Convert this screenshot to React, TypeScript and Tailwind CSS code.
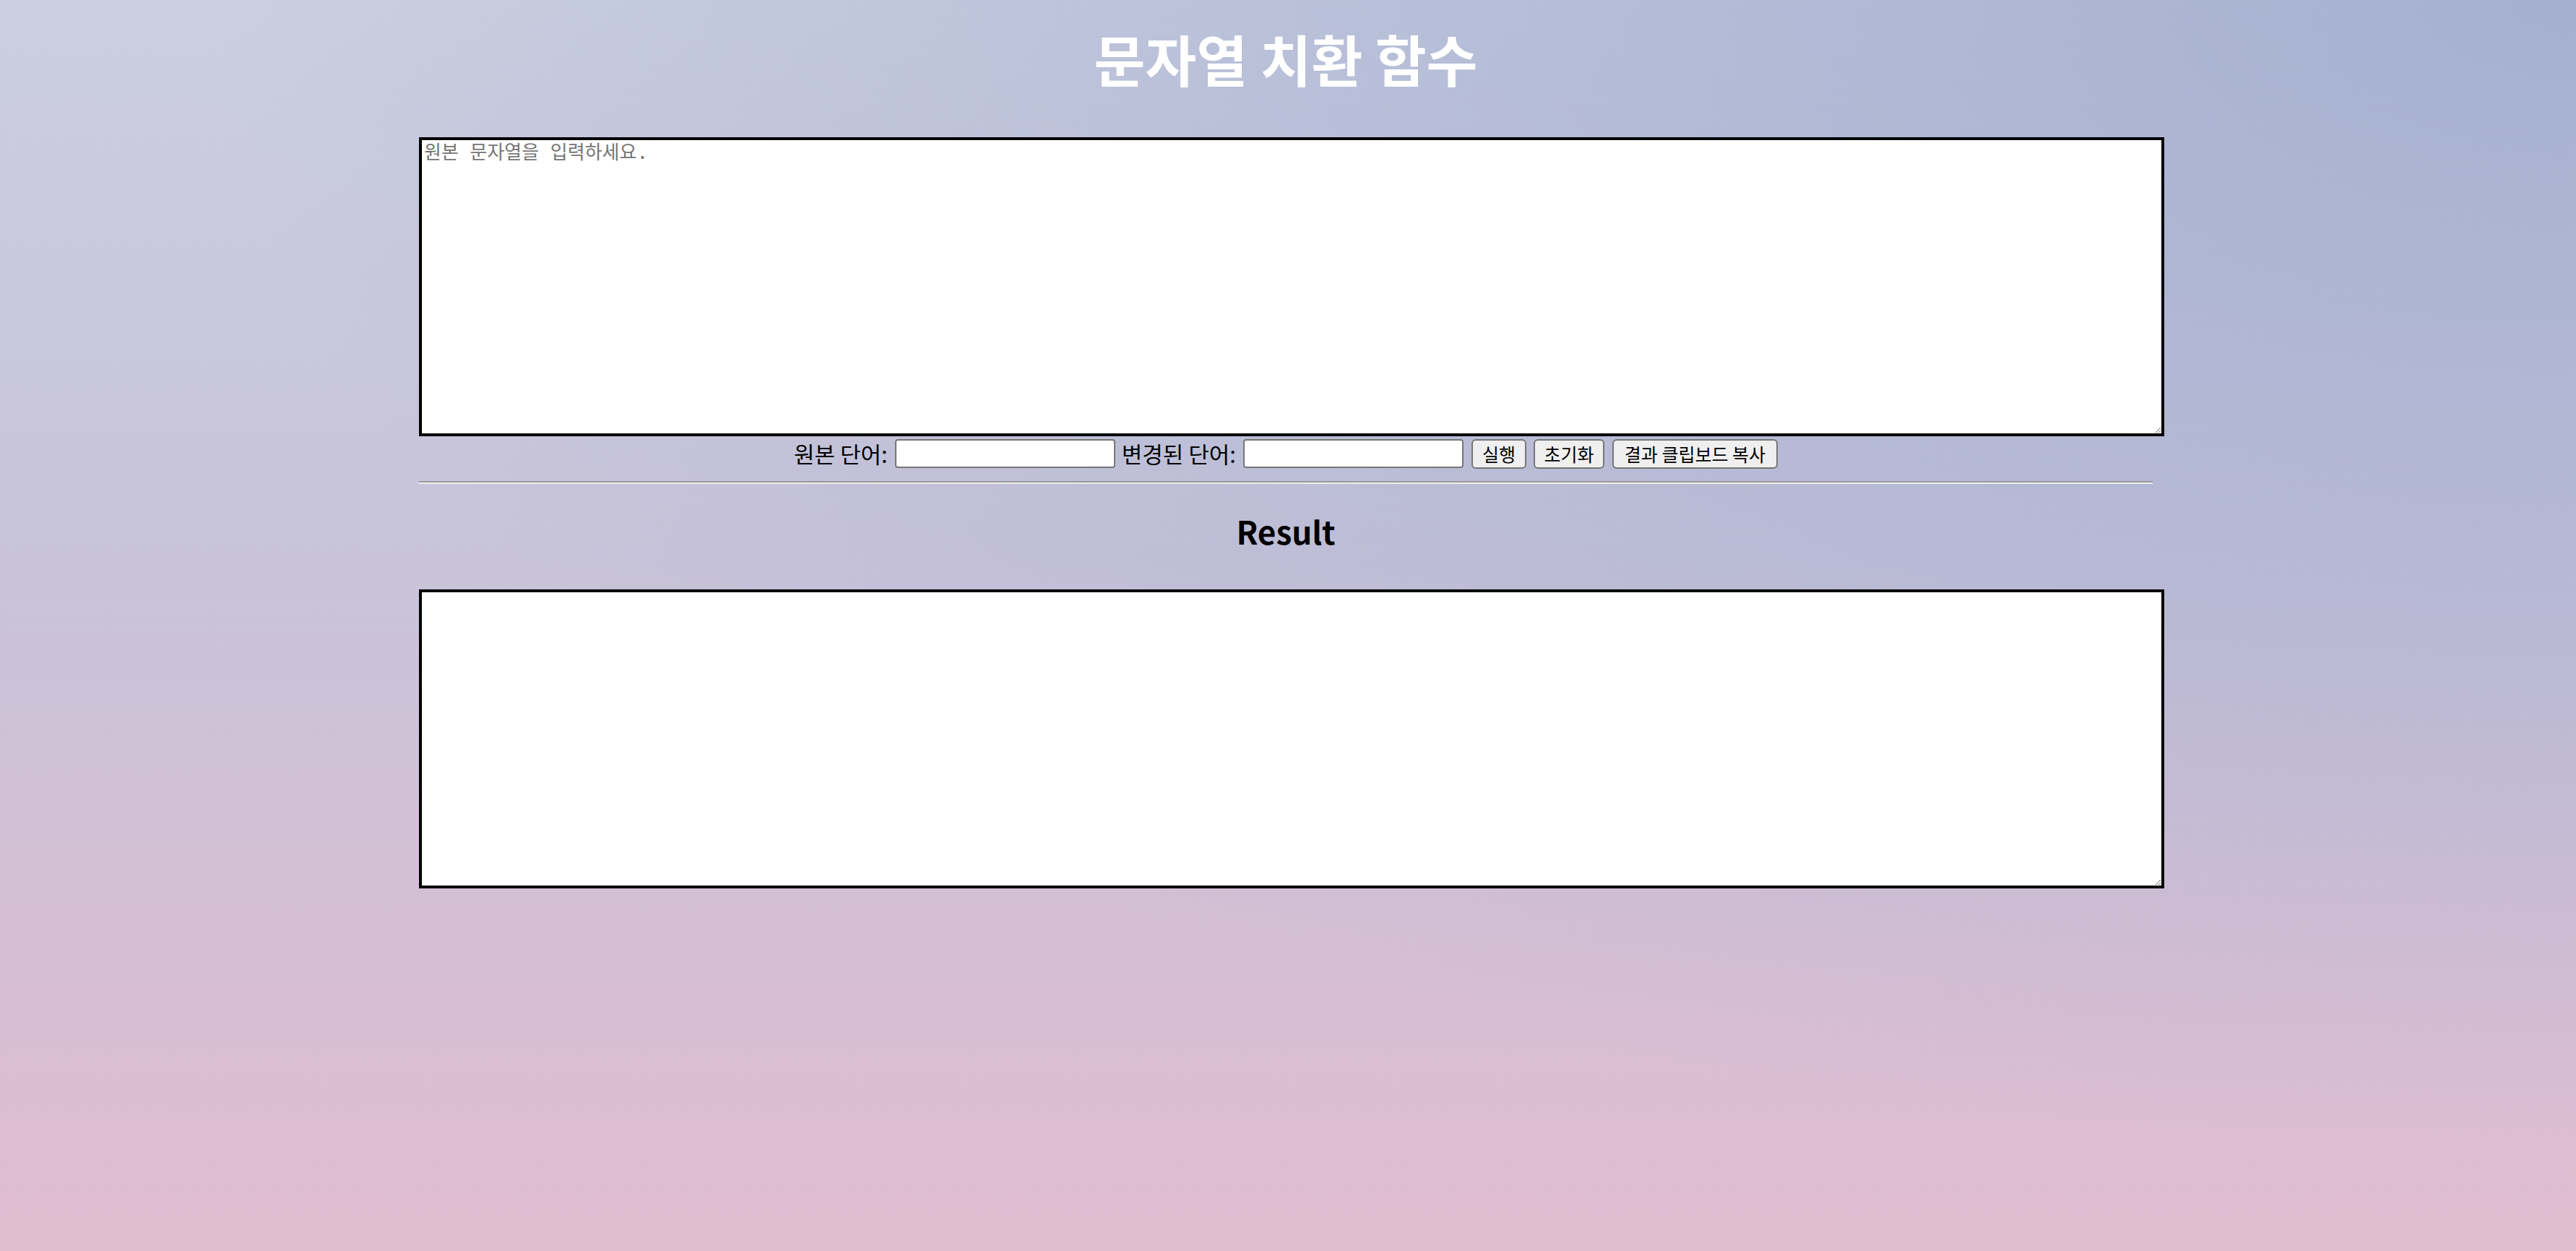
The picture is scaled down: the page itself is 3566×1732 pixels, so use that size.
import React from "react";

export default function App() {
  return (
    <div
      className="min-h-[1732px] w-full bg-[radial-gradient(ellipse_at_top_right,rgba(158,170,206,0.85),rgba(158,170,206,0)_65%),linear-gradient(to_bottom,#cbcfe0,#c8c3d9_45%,#e1bcd0)]"
      style={{ fontFamily: '"Noto Sans CJK KR", "Noto Sans", sans-serif' }}
    >
      <div className="pl-[580px] flex flex-col">
        <h1 className="w-[2400px] h-[160px] flex items-center justify-center text-white font-bold text-[77px] leading-none m-0">
          문자열 치환 함수
        </h1>
        <textarea
          className="mt-[30px] w-[2416px] h-[414px] border-4 border-black bg-white pl-[3px] pt-[2px] text-[26px] leading-[30px] text-black placeholder:text-[#757575] outline-none resize"
          style={{ fontFamily: '"DejaVu Sans Mono", "Noto Sans CJK KR", monospace' }}
          placeholder="원본 문자열을 입력하세요."
        />
        <div className="w-[2400px] h-[48px] flex items-center justify-center text-[31px] text-black">
          <span>원본 단어:</span>
          <input
            type="text"
            className="ml-[10px] w-[305px] h-[40px] border-2 border-[#767676] rounded-[4px] bg-white"
          />
          <span className="ml-[9px]">변경된 단어:</span>
          <input
            type="text"
            className="ml-[10px] w-[305px] h-[40px] border-2 border-[#767676] rounded-[4px] bg-white"
          />
          <button className="ml-[11px] w-[76px] h-[41px] border-2 border-[#767676] rounded-[6px] bg-[#efefef] text-[25px] leading-none text-black">
            실행
          </button>
          <button className="ml-[10px] w-[98px] h-[41px] border-2 border-[#767676] rounded-[6px] bg-[#efefef] text-[25px] leading-none text-black">
            초기화
          </button>
          <button className="ml-[11px] w-[229px] h-[41px] border-2 border-[#767676] rounded-[6px] bg-[#efefef] text-[25px] leading-none text-black">
            결과 클립보드 복사
          </button>
        </div>
        <hr className="mt-[14px] w-[2400px] h-0 border-0 border-t-2 border-t-[#9a9a9a] border-b-2 border-b-[#eeeeee]" />
        <h2 className="w-[2400px] h-[130px] flex items-center justify-center text-[44px] font-bold text-black leading-none m-0">
          Result
        </h2>
        <textarea className="mt-[16px] w-[2416px] h-[414px] border-4 border-black bg-white outline-none resize" />
      </div>
    </div>
  );
}
